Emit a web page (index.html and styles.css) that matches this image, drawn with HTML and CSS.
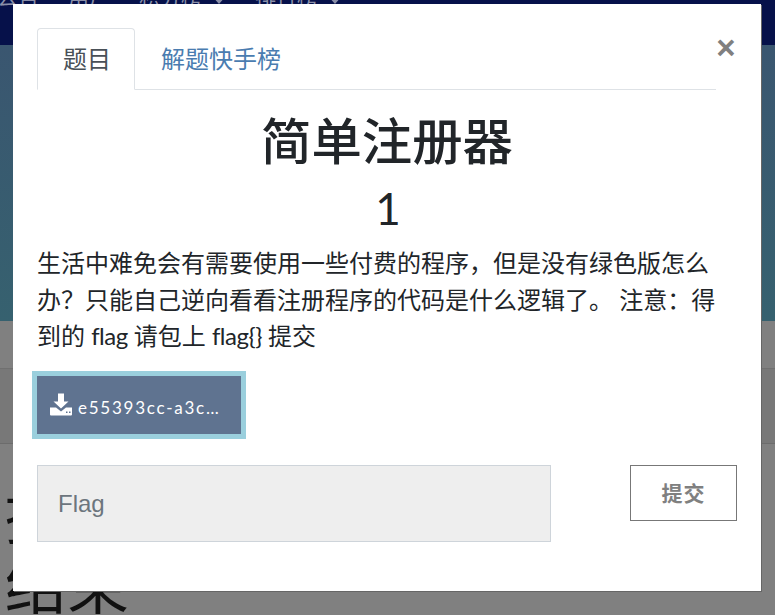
FILE: index.html
```html
<!DOCTYPE html>
<html lang="zh">
<head>
<meta charset="utf-8">
<title>简单注册器</title>
<link rel="stylesheet" href="styles.css">
</head>
<body>
<div class="backdrop">
  <header class="topbar"><nav class="topnav"><span class="nav-first">公告</span><span>用户</span><span>积分榜<i class="caret"></i></span><span>排行榜<i class="caret"></i></span></nav></header>
  <div class="hero"></div>
  <div class="band"></div>
  <div class="band2"></div>
  <div class="page-text">挑战<br>结束</div>
</div>
<div class="modal">
  <button class="close" type="button">×</button>
  <ul class="tabs">
    <li class="tab active">题目</li>
    <li class="tab">解题快手榜</li>
  </ul>
  <h2 class="title">简单注册器</h2>
  <h3 class="points">1</h3>
  <p class="desc">生活中难免会有需要使用一些付费的程序，但是没有绿色版怎么办？只能自己逆向看看注册程序的代码是什么逻辑了。 注意：得到的 <span class="tight">flag</span> 请包上 <span class="tight">flag{}</span> 提交</p>
  <a class="file" href="#">
    <svg class="dl" viewBox="0 0 22 22" width="22" height="23" aria-hidden="true"><path fill="#fff" d="M8 0h6v8h4.500L11 15 3.500 8H8z"/><path fill="#fff" d="M0 14h6l5 4 5-4h6v7a1 1 0 0 1-1 1H1a1 1 0 0 1-1-1z"/><path fill="#5f7390" d="M16 18h1.500v1.500H16zM19 18h1.500v1.500H19z"/></svg>
    <span class="file-name">e55393cc-a3c…</span>
  </a>
  <form class="submit-row">
    <input class="flag" type="text" placeholder="Flag">
    <button class="submit" type="button">提交</button>
  </form>
</div>
</body>
</html>
```
FILE: styles.css
```css
* { box-sizing: border-box; }
html, body { margin: 0; height: 100%; overflow: hidden; background: #808080; }
body { width: 775px; height: 615px; position: relative; font-family: Lato, "Noto Sans CJK SC", sans-serif; color: #212529; }
.backdrop { position: absolute; inset: 0; display: flex; flex-direction: column; background: #808080; }
.topbar { height: 45px; background: #06114a; overflow: hidden; flex: none; }
.topnav { display: flex; gap: 29px; margin-top: -16px; color: #8a8fa8; font-size: 21px; line-height: 26px; white-space: nowrap; }
.nav-first { margin-left: -3px; }
.caret { display: inline-block; width: 0; height: 0; margin-left: 10px; border-style: solid; border-width: 8px 7px 0; border-color: #8a8fa8 transparent transparent; vertical-align: middle; }
.hero { height: 276px; flex: none; background: linear-gradient(180deg, #3a5670 0%, #36616f 100%); }
.band { height: 48px; flex: none; background: #808080; border-bottom: 1px solid #707070; }
.band2 { height: 75px; flex: none; background: #787878; border-bottom: 1px solid #6c6c6c; }
.page-text { position: absolute; left: 5px; top: 477px; color: #111; font-size: 62px; line-height: 70px; font-family: "Noto Sans CJK SC", sans-serif; }
.modal { position: absolute; left: 13px; top: 4px; width: 748px; height: 587px; background: #fff; padding: 24px 24px 0; display: flex; flex-direction: column; box-shadow: 1px 1px 0 #666; }
.close { position: absolute; top: 24px; right: 21px; width: 28px; height: 40px; padding: 0; border: 0; background: none; color: #808080; font: 700 33px/38px "Liberation Sans", sans-serif; }
.tabs { list-style: none; margin: 0; padding: 0; display: flex; width: 679px; height: 62px; border-bottom: 1px solid #dee2e6; flex: none; }
.tab { height: 62px; padding: 0 25px; font-size: 24px; line-height: 60px; color: #4a7cb0; border: 1px solid transparent; white-space: nowrap; }
.tab.active { width: 98px; color: #495057; background: #fff; border-color: #dee2e6 #dee2e6 #fff; border-radius: 4px 4px 0 0; }
.title { margin: 18px 0 0; text-align: center; font-size: 50.400px; line-height: 66px; font-weight: 500; width: 700px; }
.points { margin: 10px 0 0; text-align: center; font-size: 44px; line-height: 48px; font-weight: 400; width: 702px; }
.desc { margin: 13px 0 0; width: 690px; font-size: 24px; line-height: 36.500px; }
.tight { letter-spacing: -.5px; }
.file { margin: 16px 0 0 -5px; width: 214px; height: 68px; display: flex; align-items: center; gap: 6px; padding-left: 13px; background: #5f7390; border: 5px solid #9acfdd; color: #fff; text-decoration: none; font-size: 17px; flex: none; }
.file-name { letter-spacing: 1.750px; padding-top: 6px; }
.dl { flex: none; }
.submit-row { display: flex; justify-content: space-between; margin-top: 26px; width: 700px; align-items: flex-start; }
.flag { width: 514px; height: 77px; padding: 2px 20px 0; background: #eee; border: 1px solid #ced4da; font: 24px "Liberation Sans", sans-serif; color: #495057; }
.flag::placeholder { color: #6c757d; opacity: 1; }
.submit { width: 107px; height: 56px; background: #fff; border: 1px solid #777; color: #808080; font: 700 21px "Noto Sans CJK SC", sans-serif; letter-spacing: 1px; padding: 0 0 2px; }
```
